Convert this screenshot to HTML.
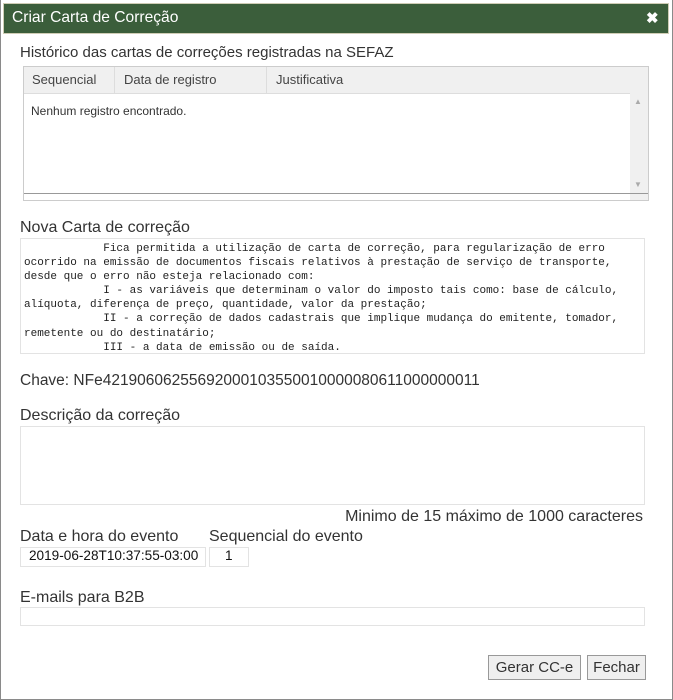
<!DOCTYPE html>
<html><head><meta charset="utf-8"><style>
*{box-sizing:border-box;margin:0;padding:0}
body{width:673px;height:700px;background:#fff;font-family:"Liberation Sans",sans-serif;color:#333;position:relative;overflow:hidden}
.a{position:absolute;white-space:nowrap}
.lbl{font-size:16px;line-height:18px;color:#333}
.box{position:absolute;border:1px solid #e3e3e3;background:#fff}
</style></head><body>
<div class="a" style="left:0;top:0;width:673px;height:700px;border:1px solid #8a8a8a;border-top:none"></div>
<div class="a" style="left:3px;top:3px;width:666px;height:31px;background:#3b5e3b;border:1px solid #cfcdb5"></div>
<div class="a" style="left:12px;top:9px;font-size:15.6px;color:#fff">Criar Carta de Correção</div>
<div class="a" style="left:646px;top:9px;font-size:15px;color:#fff;font-weight:bold">✖</div>

<div class="a lbl" style="left:20px;top:44px;font-size:15px">Histórico das cartas de correções registradas na SEFAZ</div>
<div class="box" style="left:23px;top:66px;width:626px;height:135px;border-color:#ccc"></div>
<div class="a" style="left:24px;top:67px;width:606px;height:27px;background:#f0f0f0;border-bottom:1px solid #ddd"></div>
<div class="a" style="left:630px;top:67px;width:18px;height:133px;background:#f0f0f0"></div>
<div class="a" style="left:114px;top:67px;width:1px;height:26px;background:#ddd"></div>
<div class="a" style="left:266px;top:67px;width:1px;height:26px;background:#ddd"></div>
<div class="a" style="left:32px;top:72px;font-size:13px;color:#444">Sequencial</div>
<div class="a" style="left:124px;top:72px;font-size:13px;color:#444">Data de registro</div>
<div class="a" style="left:276px;top:72px;font-size:13px;color:#444">Justificativa</div>
<div class="a" style="left:31px;top:104px;font-size:12px;color:#333">Nenhum registro encontrado.</div>
<div class="a" style="left:634px;top:97px;font-size:8px;color:#aaa">▲</div>
<div class="a" style="left:634px;top:180px;font-size:8px;color:#aaa">▼</div>
<div class="a" style="left:24px;top:193px;width:624px;height:1px;background:#999"></div>

<div class="a lbl" style="left:20px;top:219px">Nova Carta de correção</div>
<div class="box" style="left:20px;top:238px;width:625px;height:116px"></div>
<pre class="a" style="left:24px;top:242px;white-space:pre;font-family:'Liberation Mono',monospace;font-size:11px;line-height:14.1px;color:#222">            Fica permitida a utilização de carta de correção, para regularização de erro
ocorrido na emissão de documentos fiscais relativos à prestação de serviço de transporte,
desde que o erro não esteja relacionado com:
            I - as variáveis que determinam o valor do imposto tais como: base de cálculo,
alíquota, diferença de preço, quantidade, valor da prestação;
            II - a correção de dados cadastrais que implique mudança do emitente, tomador,
remetente ou do destinatário;
            III - a data de emissão ou de saída.</pre>

<div class="a lbl" style="left:20px;top:372px;font-size:15.5px">Chave: NFe42190606255692000103550010000080611000000011</div>
<div class="a lbl" style="left:20px;top:407px">Descrição da correção</div>
<div class="box" style="left:20px;top:426px;width:625px;height:79px"></div>
<div class="a lbl" style="right:30px;top:508px">Minimo de 15 máximo de 1000 caracteres</div>
<div class="a lbl" style="left:20px;top:528px">Data e hora do evento</div>
<div class="a lbl" style="left:209px;top:528px">Sequencial do evento</div>
<div class="box" style="left:20px;top:547px;width:186px;height:20px"></div>
<div class="a" style="left:29px;top:548px;font-size:13.6px;color:#111">2019-06-28T10:37:55-03:00</div>
<div class="box" style="left:209px;top:547px;width:40px;height:20px"></div>
<div class="a" style="left:225px;top:548px;font-size:13.6px;color:#111">1</div>
<div class="a lbl" style="left:20px;top:589px">E-mails para B2B</div>
<div class="box" style="left:20px;top:607px;width:625px;height:19px"></div>
<div class="a" style="left:488px;top:655px;width:93px;height:25px;background:#efefef;border:1px solid #999;font-size:15px;text-align:center;line-height:23px">Gerar CC-e</div>
<div class="a" style="left:587px;top:655px;width:59px;height:25px;background:#efefef;border:1px solid #999;font-size:15px;text-align:center;line-height:23px">Fechar</div>
</body></html>
